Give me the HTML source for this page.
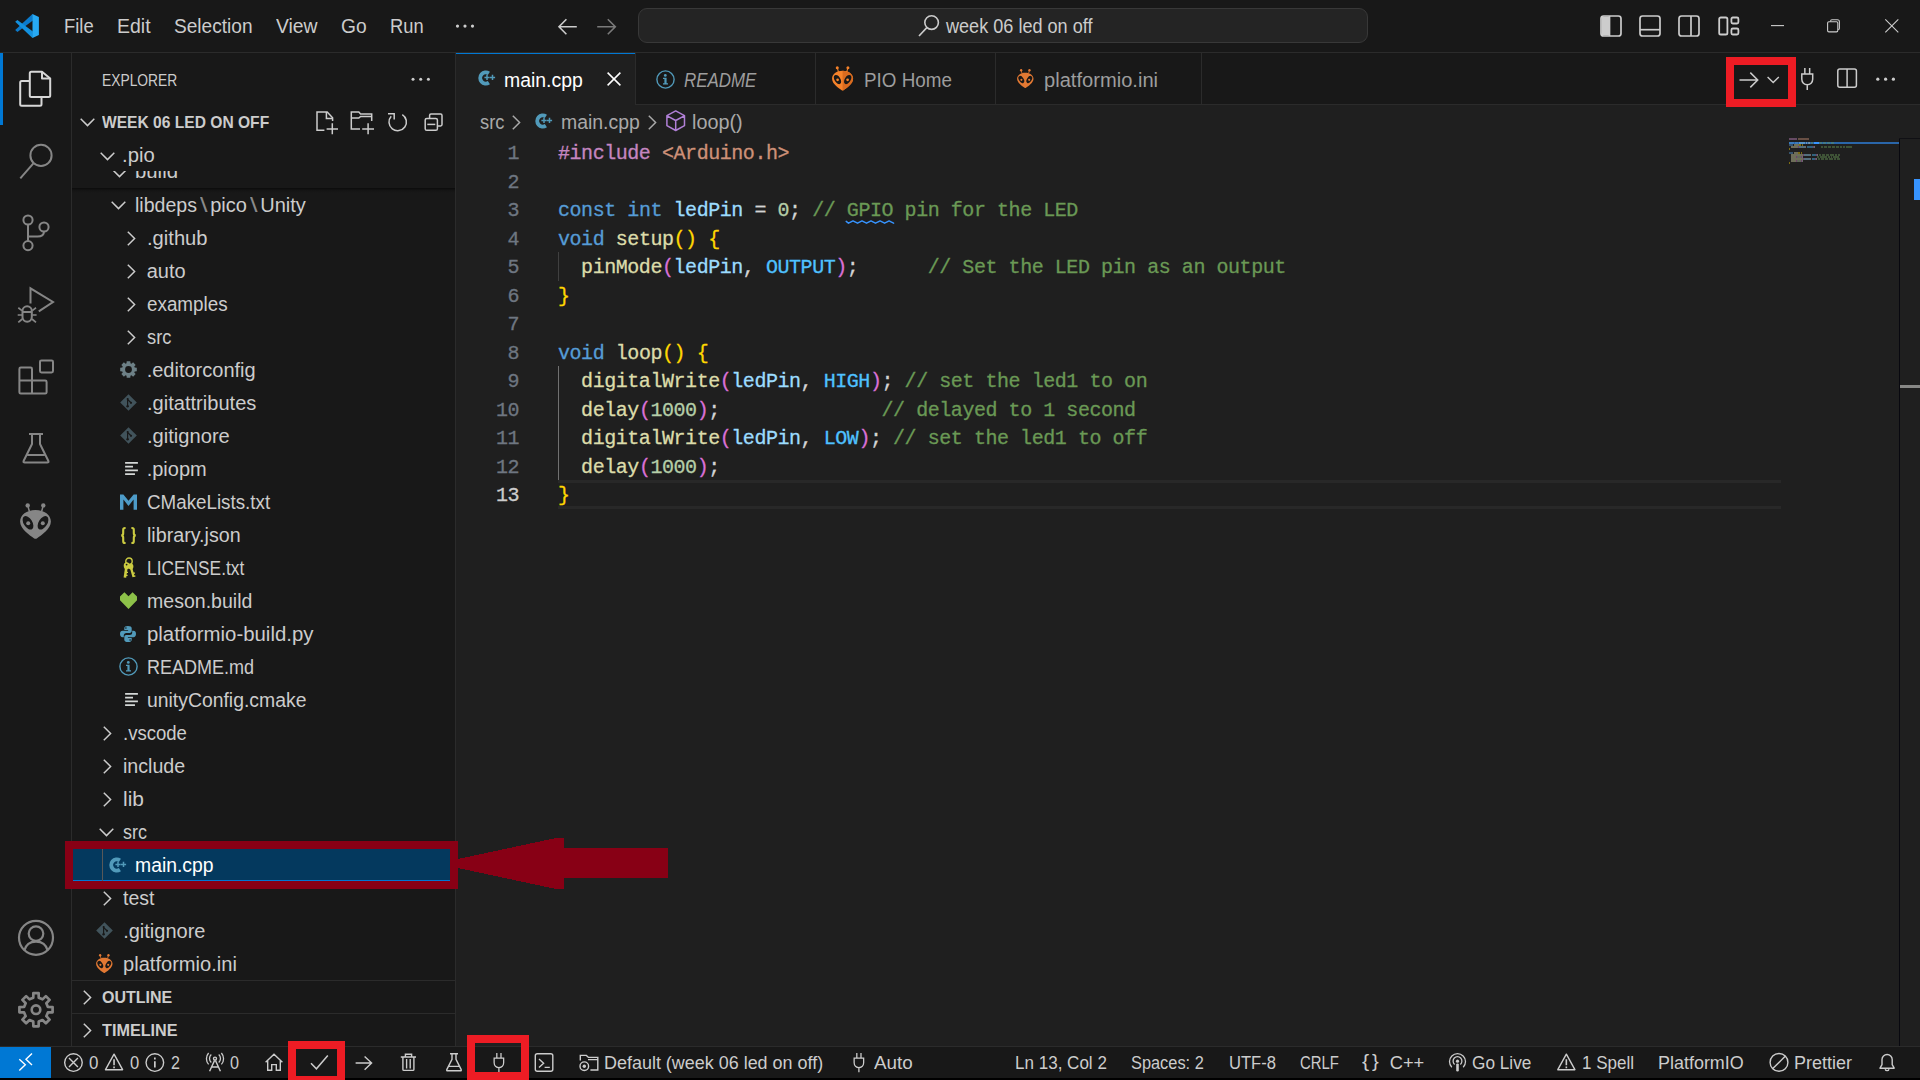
<!DOCTYPE html>
<html lang="en"><head><meta charset="utf-8"><title>main.cpp - week 06 led on off - Visual Studio Code</title>
<style>
html,body{margin:0;padding:0;background:#181818;}
body{width:1920px;height:1080px;overflow:hidden;position:relative;font-family:"Liberation Sans",sans-serif;}
.a{position:absolute;}
.t{position:absolute;white-space:pre;line-height:1;transform-origin:0 0;}
.m{position:absolute;white-space:pre;font-family:"Liberation Mono",monospace;font-size:20px;letter-spacing:-0.45px;line-height:28.5px;height:28.5px;-webkit-text-stroke:0.3px;}
svg{position:absolute;overflow:visible;}

</style></head><body>
<div class="a" style="left:0px;top:0px;width:1920px;height:52px;background:#181818;"></div>
<div class="a" style="left:0px;top:52px;width:1920px;height:1px;background:#2b2b2b;"></div>
<div class="a" style="left:0px;top:53px;width:71px;height:993px;background:#181818;"></div>
<div class="a" style="left:71px;top:53px;width:1px;height:993px;background:#2b2b2b;"></div>
<div class="a" style="left:0px;top:53px;width:3px;height:72px;background:#0078d4;"></div>
<div class="a" style="left:72px;top:53px;width:383px;height:993px;background:#181818;"></div>
<div class="a" style="left:455px;top:53px;width:1px;height:993px;background:#2b2b2b;"></div>
<div class="a" style="left:456px;top:53px;width:1464px;height:993px;background:#1f1f1f;"></div>
<div class="a" style="left:456px;top:53px;width:1464px;height:51px;background:#181818;"></div>
<div class="a" style="left:456px;top:104px;width:1464px;height:1px;background:#2b2b2b;"></div>
<div class="a" style="left:0px;top:1046px;width:1920px;height:1px;background:#2b2b2b;"></div>
<div class="a" style="left:0px;top:1047px;width:1920px;height:31px;background:#181818;"></div>
<div class="a" style="left:0px;top:1047px;width:51px;height:31px;background:#0078d4;"></div>
<div class="a" style="left:0px;top:1078px;width:1920px;height:2px;background:#000;"></div>
<svg style="left:15px;top:14px" width="24" height="24" viewBox="0 0 24 24"><polygon fill="#0b7acb" points="0.2,16.1 17.2,0.2 17.9,0.2 17.9,6.5 2.4,17.9"/><polygon fill="#1391df" points="0.2,7.8 2.4,6.1 17.9,17.6 17.9,23.8 17.2,23.8"/><polygon fill="#27a9f3" points="17.5,0.1 23.9,3.1 23.9,20.9 17.5,23.9"/></svg>
<span class="t" style="left:64.20px;top:16.00px;font-size:20px;color:#ccc;transform:scaleX(0.9193);">File</span>
<span class="t" style="left:117.20px;top:16.00px;font-size:20px;color:#ccc;transform:scaleX(0.9739);">Edit</span>
<span class="t" style="left:173.70px;top:16.00px;font-size:20px;color:#ccc;transform:scaleX(0.9550);">Selection</span>
<span class="t" style="left:276.20px;top:16.00px;font-size:20px;color:#ccc;transform:scaleX(0.9674);">View</span>
<span class="t" style="left:341.20px;top:16.00px;font-size:20px;color:#ccc;transform:scaleX(0.9588);">Go</span>
<span class="t" style="left:390.20px;top:16.00px;font-size:20px;color:#ccc;transform:scaleX(0.9155);">Run</span>
<svg style="left:455px;top:24px" width="20" height="6"><circle cx="2.5" cy="2.1" r="1.6" fill="#ccc"/><circle cx="10" cy="2.1" r="1.6" fill="#ccc"/><circle cx="17.5" cy="2.1" r="1.6" fill="#ccc"/></svg>
<svg style="left:557px;top:18px" width="21" height="17" viewBox="0 0 21 17" fill="none" stroke="#ccc" stroke-width="1.6"><path d="M19.8 8.7H2.2M9.4 1.2L2 8.7L9.4 16.2"/></svg>
<svg style="left:596px;top:18px" width="21" height="17" viewBox="0 0 21 17" fill="none" stroke="#7a7a7a" stroke-width="1.6"><path d="M1.2 8.7H19.2M11.8 1.2L19.3 8.7L11.8 16.2"/></svg>
<div class="a" style="left:638px;top:8px;width:728px;height:33px;border:1px solid #383838;border-radius:9px;background:#242424;"></div>
<svg style="left:918px;top:14px" width="22" height="23" viewBox="0 0 22 23" fill="none" stroke="#ccc" stroke-width="1.6"><circle cx="13.6" cy="8.6" r="6.8"/><path d="M8.8 13.6L1 22"/></svg>
<span class="t" style="left:946.29px;top:16.00px;font-size:20px;color:#ccc;transform:scaleX(0.9044);">week 06 led on off</span>
<svg style="left:1600px;top:15px" width="22" height="22" viewBox="0 0 22 22" fill="none" stroke="#ccc" stroke-width="1.7"><rect x="1" y="1" width="20" height="20" rx="2.6"/><path d="M1.5 1.5H9.5V20.5H1.5z" fill="#ccc" stroke="none"/><path d="M9.5 1V21"/></svg>
<svg style="left:1639px;top:15px" width="22" height="22" viewBox="0 0 22 22" fill="none" stroke="#ccc" stroke-width="1.7"><rect x="1" y="1" width="20" height="20" rx="2.6"/><path d="M1 14.7H21"/></svg>
<svg style="left:1678px;top:15px" width="22" height="22" viewBox="0 0 22 22" fill="none" stroke="#ccc" stroke-width="1.7"><rect x="1" y="1" width="20" height="20" rx="2.6"/><path d="M13 1V21"/></svg>
<svg style="left:1718px;top:16px" width="22" height="20" viewBox="0 0 22 20" fill="none" stroke="#ccc" stroke-width="1.8"><rect x="1.2" y="1.5" width="8.2" height="17" rx="1.6"/><rect x="13.4" y="1.5" width="7" height="6" rx="1.4"/><rect x="13.4" y="12.5" width="7" height="6" rx="1.4"/></svg>
<svg style="left:1770px;top:18px" width="130" height="16" viewBox="0 0 130 16" fill="none" stroke="#ccc" stroke-width="1.1"><path d="M1 7.6H14"/><rect x="57.6" y="3.7" width="10.2" height="10.2" rx="1.3"/><path d="M60.6 3.5V3Q60.6 1.7 61.9 1.7H67.4Q69.4 1.7 69.4 3.7V10.2Q69.4 11.5 68.1 11.5"/><path d="M115.3 1.3L128.3 14.3M128.3 1.3L115.3 14.3"/></svg>
<svg style="left:0;top:0" width="72" height="1046" viewBox="0 0 72 1046" fill="none" stroke-width="2" stroke-linejoin="round"><g stroke="#d7d7d7"><path d="M31.5 71.8H42L50.2 78.6V95.5Q50.2 97 48.7 97H31.3Q29.8 97 29.8 95.5V73.3Q29.8 71.8 31.3 71.8Z"/><path d="M42 71.8V78.6H50.2"/><path d="M29.8 81H21.7Q20.2 81 20.2 82.5V104.2Q20.2 105.7 21.7 105.7H40Q41.5 105.7 41.5 104.2V97"/></g><g stroke="#868686"><circle cx="41" cy="155.4" r="10.6"/><path d="M33.6 163.2L20.3 178.3"/></g><g stroke="#868686"><circle cx="28" cy="220" r="4.6"/><circle cx="44" cy="227" r="4.6"/><circle cx="28" cy="245.6" r="4.6"/><path d="M28 224.6V241M44 231.6Q44 236.6 37.5 236.6H28"/></g><g stroke="#868686"><path d="M30.5 303.5V288.3L53 302L38.8 311.3" stroke-linejoin="miter"/><rect x="22.5" y="306.3" width="9.3" height="15.4" rx="4.6"/><path d="M22.5 312H31.8" /><path d="M18.3 307.8L22 310.6M36 307.8L32.3 310.6M17.7 315H22M36.6 315H32.3M18.3 322.4L22.3 319M36 322.4L32 319" stroke-width="1.7"/></g><g stroke="#868686"><path d="M19.4 369Q19.4 367.6 20.8 367.6H30.6Q32 367.6 32 369V380.6H45.2Q46.6 380.6 46.6 382V392.2Q46.6 393.6 45.2 393.6H20.8Q19.4 393.6 19.4 392.2Z"/><path d="M19.4 380.6H32V393.6"/><rect x="40" y="360.4" width="13" height="12" rx="1.4"/></g><g stroke="#868686"><path d="M29 434H43M32 434V444L23.6 461Q23 462.6 24.8 462.6H47.2Q49 462.6 48.4 461L40 444V434M27.5 455H44.5"/></g><g stroke="#868686"><circle cx="36" cy="937.8" r="17" stroke-width="2.2"/><circle cx="36" cy="933.6" r="7.3" stroke-width="2.2"/><path d="M24.3 950.6Q26.6 941.6 36 941.6Q45.4 941.6 47.7 950.6" stroke-width="2.2"/></g><g stroke="#868686"><path d="M47.89 1006.97 L52.59 1007.07 L52.59 1012.33 L47.89 1012.43 L46.34 1016.18 L49.59 1019.57 L45.87 1023.29 L42.48 1020.04 L38.73 1021.59 L38.63 1026.29 L33.37 1026.29 L33.27 1021.59 L29.52 1020.04 L26.13 1023.29 L22.41 1019.57 L25.66 1016.18 L24.11 1012.43 L19.41 1012.33 L19.41 1007.07 L24.11 1006.97 L25.66 1003.22 L22.41 999.83 L26.13 996.11 L29.52 999.36 L33.27 997.81 L33.37 993.11 L38.63 993.11 L38.73 997.81 L42.48 999.36 L45.87 996.11 L49.59 999.83 L46.34 1003.22Z" stroke-width="2.7"/><circle cx="36" cy="1009.7" r="4.3" stroke-width="2.6"/></g></svg>
<svg style="left:20.1px;top:503px" width="31" height="36" viewBox="0 0 31 36"><path d="M15.5 7C24.5 7 30.9 12 30.9 18.5C30.9 26 21.5 32 16.8 35.4Q15.5 36.3 14.2 35.4C9.5 32 0.1 26 0.1 18.5C0.1 12 6.5 7 15.5 7Z" fill="#868686"/><path d="M7.7 2.4L9.4 8.5M23.3 2.4L21.6 8.5" stroke="#868686" stroke-width="1.5" fill="none"/><circle cx="7.7" cy="2.4" r="2.2" fill="#868686"/><circle cx="23.3" cy="2.4" r="2.2" fill="#868686"/><ellipse cx="8" cy="19.8" rx="4.3" ry="7.5" transform="rotate(-32 8 19.8)" fill="#181818"/><ellipse cx="23" cy="19.8" rx="4.3" ry="7.5" transform="rotate(32 23 19.8)" fill="#181818"/><circle cx="8.2" cy="20.3" r="2" fill="#868686"/><circle cx="22.8" cy="20.3" r="2" fill="#868686"/></svg>
<span class="t" style="left:101.60px;top:72.00px;font-size:17px;color:#ccc;transform:scaleX(0.8124);">EXPLORER</span>
<svg style="left:411px;top:77px" width="20" height="5"><circle cx="2" cy="2.3" r="1.5" fill="#ccc"/><circle cx="9.7" cy="2.3" r="1.5" fill="#ccc"/><circle cx="17.4" cy="2.3" r="1.5" fill="#ccc"/></svg>
<span class="t" style="left:101.60px;top:114.00px;font-size:17px;color:#ccc;transform:scaleX(0.9170);font-weight:700;">WEEK 06 LED ON OFF</span>
<svg style="left:79.5px;top:118px" width="15" height="9" viewBox="0 0 15 9" fill="none" stroke="#ccc" stroke-width="1.5"><path d="M0.7 0.8L7.5 7.6L14.3 0.8"/></svg>
<svg style="left:300px;top:104px" width="156" height="36" viewBox="300 104 156 36" fill="none" stroke="#ccc" stroke-width="1.5"><path d="M324.4 130.2H317V112H327.2L332.6 117.8V121"/><path d="M326.4 112V118.4H332.6"/><path d="M326.6 129H338M332.3 123.3V134.2"/><path d="M360 129H351.3V112H358.8L360.6 114H371.7V121"/><path d="M351.3 118H358.8L360.6 116.4H371.7"/><path d="M362.2 129H374M368.1 123.3V134.2"/><path d="M402.3 114.6A8.7 8.7 0 1 1 391.2 116.2"/><path d="M388 113.7H394.2V119.4"/><rect x="425.2" y="118.5" width="12.2" height="11.8" rx="1.6"/><path d="M427.3 124.4H435.3"/><path d="M429.6 118.3V115.4Q429.6 114 431 114H440.6Q442 114 442 115.4V124.6Q442 126 440.6 126H437.6"/></svg>
<div class="a" style="left:72px;top:171px;width:383px;height:17px;overflow:hidden;">
<svg style="left:39.5px;top:-2.5px" width="15" height="9" viewBox="0 0 15 9" fill="none" stroke="#ccc" stroke-width="1.5"><path d="M0.7 0.8L7.5 7.6L14.3 0.8"/></svg>
<span class="t" style="left:62.80px;top:-10.00px;font-size:20px;color:#ccc;transform:scaleX(1.0165);">build</span>
</div>
<svg style="left:99.5px;top:152px" width="15" height="9" viewBox="0 0 15 9" fill="none" stroke="#ccc" stroke-width="1.5"><path d="M0.7 0.8L7.5 7.6L14.3 0.8"/></svg>
<span class="t" style="left:122.20px;top:145.00px;font-size:20px;color:#ccc;transform:scaleX(1.0124);">.pio</span>
<div class="a" style="left:72px;top:188px;width:383px;height:5px;background:linear-gradient(#000 0%,rgba(0,0,0,0.35) 40%,rgba(0,0,0,0) 100%);opacity:.55"></div>
<div class="a" style="left:72px;top:848px;width:383px;height:33px;background:#04395e;box-sizing:border-box;border:1px solid #0078d4;"></div>
<div class="a" style="left:102px;top:848.5px;width:1px;height:33px;background:#585858;"></div>
<svg style="left:111px;top:201.3px" width="15" height="9" viewBox="0 0 15 9" fill="none" stroke="#ccc" stroke-width="1.5"><path d="M0.7 0.8L7.5 7.6L14.3 0.8"/></svg>
<svg style="left:127px;top:230.8px" width="9" height="15" viewBox="0 0 9 15" fill="none" stroke="#ccc" stroke-width="1.5"><path d="M0.8 0.7L7.6 7.5L0.8 14.3"/></svg>
<span class="t" style="left:146.70px;top:228.00px;font-size:20px;color:#ccc;transform:scaleX(1.0083);">.github</span>
<svg style="left:127px;top:263.8px" width="9" height="15" viewBox="0 0 9 15" fill="none" stroke="#ccc" stroke-width="1.5"><path d="M0.8 0.7L7.6 7.5L0.8 14.3"/></svg>
<span class="t" style="left:146.70px;top:261.00px;font-size:20px;color:#ccc;">auto</span>
<svg style="left:127px;top:296.8px" width="9" height="15" viewBox="0 0 9 15" fill="none" stroke="#ccc" stroke-width="1.5"><path d="M0.8 0.7L7.6 7.5L0.8 14.3"/></svg>
<span class="t" style="left:146.70px;top:294.00px;font-size:20px;color:#ccc;transform:scaleX(0.9416);">examples</span>
<svg style="left:127px;top:329.8px" width="9" height="15" viewBox="0 0 9 15" fill="none" stroke="#ccc" stroke-width="1.5"><path d="M0.8 0.7L7.6 7.5L0.8 14.3"/></svg>
<span class="t" style="left:146.70px;top:327.00px;font-size:20px;color:#ccc;transform:scaleX(0.9139);">src</span>
<svg style="left:120.00px;top:361.20px" width="17" height="17" viewBox="0 0 17 17"><path fill-rule="evenodd" fill="#6d8086" d="M14.70 6.54 L16.81 6.70 L16.81 10.30 L14.70 10.46 L14.27 11.49 L15.65 13.10 L13.10 15.65 L11.49 14.27 L10.46 14.70 L10.30 16.81 L6.70 16.81 L6.54 14.70 L5.51 14.27 L3.90 15.65 L1.35 13.10 L2.73 11.49 L2.30 10.46 L0.19 10.30 L0.19 6.70 L2.30 6.54 L2.73 5.51 L1.35 3.90 L3.90 1.35 L5.51 2.73 L6.54 2.30 L6.70 0.19 L10.30 0.19 L10.46 2.30 L11.49 2.73 L13.10 1.35 L15.65 3.90 L14.27 5.51Z M8.5 5.1A3.4 3.4 0 1 0 8.5 11.9A3.4 3.4 0 1 0 8.5 5.1Z"/></svg>
<span class="t" style="left:146.70px;top:360.00px;font-size:20px;color:#ccc;">.editorconfig</span>
<svg style="left:120.00px;top:394.30px" width="17" height="17" viewBox="0 0 17 17"><path fill="#41535b" d="M8.5 0.2L16.8 8.5L8.5 16.8L0.2 8.5Z"/><path d="M7.6 4.2V12.6M7.6 5.4L11.2 9" stroke="#181818" stroke-width="1.2" fill="none"/><circle cx="7.6" cy="12.2" r="1.2" fill="#181818"/><circle cx="11" cy="8.8" r="1.1" fill="#181818"/><circle cx="7.6" cy="5" r="1" fill="#181818"/></svg>
<span class="t" style="left:146.70px;top:393.00px;font-size:20px;color:#ccc;transform:scaleX(1.0037);">.gitattributes</span>
<svg style="left:120.00px;top:427.30px" width="17" height="17" viewBox="0 0 17 17"><path fill="#41535b" d="M8.5 0.2L16.8 8.5L8.5 16.8L0.2 8.5Z"/><path d="M7.6 4.2V12.6M7.6 5.4L11.2 9" stroke="#181818" stroke-width="1.2" fill="none"/><circle cx="7.6" cy="12.2" r="1.2" fill="#181818"/><circle cx="11" cy="8.8" r="1.1" fill="#181818"/><circle cx="7.6" cy="5" r="1" fill="#181818"/></svg>
<span class="t" style="left:146.70px;top:426.00px;font-size:20px;color:#ccc;transform:scaleX(1.0061);">.gitignore</span>
<svg style="left:125.00px;top:461.90px" width="14" height="13" viewBox="0 0 14 13.2"><path d="M0 1H13M0 4.8H8M0 8.5H13M0 12.2H10" stroke="#d4d7d6" stroke-width="1.8" fill="none"/></svg>
<span class="t" style="left:146.70px;top:459.00px;font-size:20px;color:#ccc;">.piopm</span>
<svg style="left:120.10px;top:494.20px" width="17" height="16" viewBox="0 0 17 16"><path fill="#4d9bc8" d="M0 15.8V0.4H3.4L8.5 6.8L13.6 0.4H17V15.8H13.6V5.6L8.5 12L3.4 5.6V15.8Z"/></svg>
<span class="t" style="left:146.70px;top:492.00px;font-size:20px;color:#ccc;transform:scaleX(0.9390);">CMakeLists.txt</span>
<svg style="left:120.30px;top:526.50px" width="17" height="17" viewBox="0 0 17 17"><path d="M5.6 1H5Q3.2 1 3.2 2.8V6.3Q3.2 8.5 1.2 8.5Q3.2 8.5 3.2 10.7V14.2Q3.2 16 5 16H5.6M11.4 1H12Q13.8 1 13.8 2.8V6.3Q13.8 8.5 15.8 8.5Q13.8 8.5 13.8 10.7V14.2Q13.8 16 12 16H11.4" stroke="#cbcb41" stroke-width="2.1" fill="none"/></svg>
<span class="t" style="left:146.70px;top:525.00px;font-size:20px;color:#ccc;transform:scaleX(0.9832);">library.json</span>
<svg style="left:121.60px;top:557.30px" width="14" height="22" viewBox="0 0 14 22"><circle cx="7" cy="4.2" r="3.2" stroke="#cbcb41" stroke-width="1.4" fill="none"/><ellipse cx="4.7" cy="8.8" rx="3" ry="3.5" fill="#cbcb41"/><path d="M4.3 11L2.9 20.6" stroke="#cbcb41" stroke-width="2.6" fill="none"/><path d="M3.6 15.4H6M3.2 18.4H5.6" stroke="#cbcb41" stroke-width="1.3" fill="none"/><ellipse cx="8.9" cy="9.4" rx="2.5" ry="3" fill="#cbcb41"/><path d="M9.3 11.6L11.6 20" stroke="#cbcb41" stroke-width="2.3" fill="none"/><path d="M10.6 16.2H13M11.4 19.2H13.4" stroke="#cbcb41" stroke-width="1.2" fill="none"/><circle cx="4.6" cy="7.6" r="0.9" fill="#181818"/></svg>
<span class="t" style="left:147.20px;top:558.00px;font-size:20px;color:#ccc;transform:scaleX(0.8664);">LICENSE.txt</span>
<svg style="left:120.00px;top:592.20px" width="17" height="17" viewBox="0 0 17 17"><path fill="#8dc149" d="M8.5 16.9L0 8.2V4.6L4.4 0.2L8.5 4.2L12.6 0.2L17 4.6V8.2Z"/></svg>
<span class="t" style="left:146.70px;top:591.00px;font-size:20px;color:#ccc;transform:scaleX(0.9768);">meson.build</span>
<svg style="left:120.40px;top:626.20px" width="16" height="16" viewBox="0 0 16 16"><path fill="#519aba" d="M7.9 0C5.6 0 4.3 0.9 4.3 2.3V4.1H8.1V4.8H2.5C1 4.8 0 6 0 8C0 10 1 11.2 2.5 11.2H3.8V9.2C3.8 7.9 4.9 6.9 6.2 6.9H9.8C10.9 6.9 11.7 6.1 11.7 5V2.3C11.7 0.9 10.3 0 7.9 0ZM5.9 1.2A0.8 0.8 0 1 1 5.9 2.8A0.8 0.8 0 1 1 5.9 1.2Z"/><path fill="#519aba" d="M8.1 16C10.4 16 11.7 15.1 11.7 13.7V11.9H7.9V11.2H13.5C15 11.2 16 10 16 8C16 6 15 4.8 13.5 4.8H12.2V6.8C12.2 8.1 11.1 9.1 9.8 9.1H6.2C5.1 9.1 4.3 9.9 4.3 11V13.7C4.3 15.1 5.7 16 8.1 16ZM10.1 14.8A0.8 0.8 0 1 1 10.1 13.2A0.8 0.8 0 1 1 10.1 14.8Z"/></svg>
<span class="t" style="left:146.70px;top:624.00px;font-size:20px;color:#ccc;transform:scaleX(1.0184);">platformio-build.py</span>
<svg style="left:119.10px;top:657.40px" width="19" height="19" viewBox="0 0 19 19"><circle cx="9.5" cy="9.5" r="8.6" stroke="#519aba" stroke-width="1.4" fill="none"/><circle cx="9.3" cy="5.4" r="1.4" fill="#519aba"/><path fill="#519aba" d="M7 7.8H10.6V13.2H12V14.4H7V13.2H8.4V9H7Z"/></svg>
<span class="t" style="left:147.20px;top:657.00px;font-size:20px;color:#ccc;transform:scaleX(0.9008);">README.md</span>
<svg style="left:125.00px;top:692.90px" width="14" height="13" viewBox="0 0 14 13.2"><path d="M0 1H13M0 4.8H8M0 8.5H13M0 12.2H10" stroke="#d4d7d6" stroke-width="1.8" fill="none"/></svg>
<span class="t" style="left:146.70px;top:690.00px;font-size:20px;color:#ccc;transform:scaleX(0.9690);">unityConfig.cmake</span>
<svg style="left:103px;top:725.8px" width="9" height="15" viewBox="0 0 9 15" fill="none" stroke="#ccc" stroke-width="1.5"><path d="M0.8 0.7L7.6 7.5L0.8 14.3"/></svg>
<span class="t" style="left:122.90px;top:723.00px;font-size:20px;color:#ccc;transform:scaleX(0.9274);">.vscode</span>
<svg style="left:103px;top:758.8px" width="9" height="15" viewBox="0 0 9 15" fill="none" stroke="#ccc" stroke-width="1.5"><path d="M0.8 0.7L7.6 7.5L0.8 14.3"/></svg>
<span class="t" style="left:122.90px;top:756.00px;font-size:20px;color:#ccc;transform:scaleX(0.9811);">include</span>
<svg style="left:103px;top:791.8px" width="9" height="15" viewBox="0 0 9 15" fill="none" stroke="#ccc" stroke-width="1.5"><path d="M0.8 0.7L7.6 7.5L0.8 14.3"/></svg>
<span class="t" style="left:122.90px;top:789.00px;font-size:20px;color:#ccc;transform:scaleX(1.0450);">lib</span>
<svg style="left:99px;top:828.3px" width="15" height="9" viewBox="0 0 15 9" fill="none" stroke="#ccc" stroke-width="1.5"><path d="M0.7 0.8L7.5 7.6L14.3 0.8"/></svg>
<span class="t" style="left:122.90px;top:822.00px;font-size:20px;color:#ccc;transform:scaleX(0.8951);">src</span>
<svg style="left:109.00px;top:856.50px" width="18" height="16" viewBox="0 0 18 16"><path d="M10.9 3.3A5.6 5.6 0 1 0 10.9 12.7" stroke="#519aba" stroke-width="3.9" fill="none"/><path d="M6.4 7.4H11.6M9 4.8V10M11.9 7.4H17.1M14.5 4.8V10" stroke="#519aba" stroke-width="1.5" fill="none"/></svg>
<span class="t" style="left:134.90px;top:855.00px;font-size:20px;color:#fff;transform:scaleX(0.9680);">main.cpp</span>
<svg style="left:103px;top:890.8px" width="9" height="15" viewBox="0 0 9 15" fill="none" stroke="#ccc" stroke-width="1.5"><path d="M0.8 0.7L7.6 7.5L0.8 14.3"/></svg>
<span class="t" style="left:122.90px;top:888.00px;font-size:20px;color:#ccc;transform:scaleX(0.9752);">test</span>
<svg style="left:96.00px;top:922.30px" width="17" height="17" viewBox="0 0 17 17"><path fill="#41535b" d="M8.5 0.2L16.8 8.5L8.5 16.8L0.2 8.5Z"/><path d="M7.6 4.2V12.6M7.6 5.4L11.2 9" stroke="#181818" stroke-width="1.2" fill="none"/><circle cx="7.6" cy="12.2" r="1.2" fill="#181818"/><circle cx="11" cy="8.8" r="1.1" fill="#181818"/><circle cx="7.6" cy="5" r="1" fill="#181818"/></svg>
<span class="t" style="left:123.20px;top:921.00px;font-size:20px;color:#ccc;">.gitignore</span>
<svg style="left:96.3px;top:954.4px" width="16.6" height="19.2" viewBox="0 0 31 36"><path d="M15.5 7C24.5 7 30.9 12 30.9 18.5C30.9 26 21.5 32 16.8 35.4Q15.5 36.3 14.2 35.4C9.5 32 0.1 26 0.1 18.5C0.1 12 6.5 7 15.5 7Z" fill="#e37933"/><path d="M7.7 2.4L9.4 8.5M23.3 2.4L21.6 8.5" stroke="#e37933" stroke-width="1.5" fill="none"/><circle cx="7.7" cy="2.4" r="2.2" fill="#e37933"/><circle cx="23.3" cy="2.4" r="2.2" fill="#e37933"/><ellipse cx="8" cy="19.8" rx="4.3" ry="7.5" transform="rotate(-32 8 19.8)" fill="#181818"/><ellipse cx="23" cy="19.8" rx="4.3" ry="7.5" transform="rotate(32 23 19.8)" fill="#181818"/><circle cx="8.2" cy="20.3" r="2" fill="#e37933"/><circle cx="22.8" cy="20.3" r="2" fill="#e37933"/></svg>
<span class="t" style="left:123.20px;top:954.00px;font-size:20px;color:#ccc;transform:scaleX(1.0044);">platformio.ini</span>
<span class="t" style="left:134.80px;top:195.00px;font-size:20px;color:#ccc;transform:scaleX(0.9779);">libdeps</span>
<span class="t" style="left:200.20px;top:195.00px;font-size:20px;color:#8a8a8a;transform:scaleX(1.3571);">\</span>
<span class="t" style="left:210.20px;top:195.00px;font-size:20px;color:#ccc;">pico</span>
<span class="t" style="left:250.20px;top:195.00px;font-size:20px;color:#8a8a8a;transform:scaleX(1.3571);">\</span>
<span class="t" style="left:260.20px;top:195.00px;font-size:20px;color:#ccc;">Unity</span>
<div class="a" style="left:72px;top:980px;width:383px;height:1px;background:#2b2b2b;"></div>
<div class="a" style="left:72px;top:1013px;width:383px;height:1px;background:#2b2b2b;"></div>
<svg style="left:83.3px;top:989.5px" width="9" height="15" viewBox="0 0 9 15" fill="none" stroke="#ccc" stroke-width="1.5"><path d="M0.8 0.7L7.6 7.5L0.8 14.3"/></svg>
<span class="t" style="left:101.50px;top:989.00px;font-size:17px;color:#ccc;transform:scaleX(0.9420);font-weight:700;">OUTLINE</span>
<svg style="left:83.3px;top:1022.5px" width="9" height="15" viewBox="0 0 9 15" fill="none" stroke="#ccc" stroke-width="1.5"><path d="M0.8 0.7L7.6 7.5L0.8 14.3"/></svg>
<span class="t" style="left:101.50px;top:1022.00px;font-size:17px;color:#ccc;transform:scaleX(0.9533);font-weight:700;">TIMELINE</span>
<div class="a" style="left:456px;top:53px;width:179px;height:52px;background:#1f1f1f;"></div>
<div class="a" style="left:456px;top:53px;width:179px;height:1px;background:#0078d4;"></div>
<div class="a" style="left:635px;top:53px;width:1px;height:51px;background:#2b2b2b;"></div>
<div class="a" style="left:815px;top:53px;width:1px;height:51px;background:#2b2b2b;"></div>
<div class="a" style="left:995px;top:53px;width:1px;height:51px;background:#2b2b2b;"></div>
<div class="a" style="left:1201px;top:53px;width:1px;height:51px;background:#2b2b2b;"></div>
<svg style="left:478.00px;top:70.00px" width="18" height="16" viewBox="0 0 18 16"><path d="M10.9 3.3A5.6 5.6 0 1 0 10.9 12.7" stroke="#519aba" stroke-width="3.9" fill="none"/><path d="M6.4 7.4H11.6M9 4.8V10M11.9 7.4H17.1M14.5 4.8V10" stroke="#519aba" stroke-width="1.5" fill="none"/></svg>
<span class="t" style="left:503.80px;top:70.00px;font-size:20px;color:#fff;transform:scaleX(0.9717);">main.cpp</span>
<svg style="left:607px;top:72px" width="14" height="14" viewBox="0 0 14 14" fill="none" stroke="#fff" stroke-width="1.5"><path d="M0.6 0.6L13.4 13.4M13.4 0.6L0.6 13.4"/></svg>
<svg style="left:656.10px;top:69.90px" width="19" height="19" viewBox="0 0 19 19"><circle cx="9.5" cy="9.5" r="8.6" stroke="#519aba" stroke-width="1.4" fill="none"/><circle cx="9.3" cy="5.4" r="1.4" fill="#519aba"/><path fill="#519aba" d="M7 7.8H10.6V13.2H12V14.4H7V13.2H8.4V9H7Z"/></svg>
<span class="t" style="left:684.20px;top:70.00px;font-size:20px;color:#9d9d9d;transform:scaleX(0.8462);font-style:italic;">README</span>
<svg style="left:832.3px;top:66.3px" width="21.2" height="24.6" viewBox="0 0 31 36"><path d="M15.5 7C24.5 7 30.9 12 30.9 18.5C30.9 26 21.5 32 16.8 35.4Q15.5 36.3 14.2 35.4C9.5 32 0.1 26 0.1 18.5C0.1 12 6.5 7 15.5 7Z" fill="#f5822a"/><path d="M15.5 7C24.5 7 30.9 12 30.9 18.5C30.9 26 21.5 32 16.8 35.4Q16 36 15.5 36Z" fill="#d96b1f"/><path d="M7.7 2.4L9.4 8.5M23.3 2.4L21.6 8.5" stroke="#f5822a" stroke-width="1.5" fill="none"/><circle cx="7.7" cy="2.4" r="2.2" fill="#f5822a"/><circle cx="23.3" cy="2.4" r="2.2" fill="#f5822a"/><ellipse cx="8" cy="19.8" rx="4.3" ry="7.5" transform="rotate(-32 8 19.8)" fill="#181818"/><ellipse cx="23" cy="19.8" rx="4.3" ry="7.5" transform="rotate(32 23 19.8)" fill="#181818"/><circle cx="8.2" cy="20.3" r="2" fill="#f5822a"/><circle cx="22.8" cy="20.3" r="2" fill="#f5822a"/></svg>
<span class="t" style="left:864.40px;top:70.00px;font-size:20px;color:#9d9d9d;transform:scaleX(0.9411);">PIO Home</span>
<svg style="left:1017.3px;top:69.4px" width="16.6" height="19.2" viewBox="0 0 31 36"><path d="M15.5 7C24.5 7 30.9 12 30.9 18.5C30.9 26 21.5 32 16.8 35.4Q15.5 36.3 14.2 35.4C9.5 32 0.1 26 0.1 18.5C0.1 12 6.5 7 15.5 7Z" fill="#e37933"/><path d="M7.7 2.4L9.4 8.5M23.3 2.4L21.6 8.5" stroke="#e37933" stroke-width="1.5" fill="none"/><circle cx="7.7" cy="2.4" r="2.2" fill="#e37933"/><circle cx="23.3" cy="2.4" r="2.2" fill="#e37933"/><ellipse cx="8" cy="19.8" rx="4.3" ry="7.5" transform="rotate(-32 8 19.8)" fill="#181818"/><ellipse cx="23" cy="19.8" rx="4.3" ry="7.5" transform="rotate(32 23 19.8)" fill="#181818"/><circle cx="8.2" cy="20.3" r="2" fill="#e37933"/><circle cx="22.8" cy="20.3" r="2" fill="#e37933"/></svg>
<span class="t" style="left:1043.80px;top:70.00px;font-size:20px;color:#9d9d9d;transform:scaleX(1.0062);">platformio.ini</span>
<svg style="left:1736px;top:66px" width="170" height="30" viewBox="1736 66 170 30" fill="none" stroke="#ccc" stroke-width="1.5"><path d="M1739.5 80H1757.6M1750.3 72.6L1757.7 80L1750.3 87.4"/><path d="M1767.6 76.9L1773.2 82.5L1778.8 76.9" stroke-width="1.4"/><rect x="1837.8" y="69" width="18.6" height="18.2" rx="2"/><path d="M1847.1 69V87.2"/><circle cx="1877.8" cy="79.2" r="1.6" fill="#ccc" stroke="none"/><circle cx="1885.6" cy="79.2" r="1.6" fill="#ccc" stroke="none"/><circle cx="1893.4" cy="79.2" r="1.6" fill="#ccc" stroke="none"/></svg>
<svg style="left:1801.3px;top:68px" width="12.5" height="22" viewBox="0 0 12.4 22" fill="none" stroke="#ccc" stroke-width="1.49"><path d="M3.8 0V6M8.6 0V6M0.75 6H11.65V11.3A5.45 5.45 0 0 1 0.75 11.3ZM6.2 16.8V22"/></svg>
<span class="t" style="left:479.60px;top:112.00px;font-size:20px;color:#a9a9a9;transform:scaleX(0.9139);">src</span>
<svg style="left:512px;top:114.7px" width="9" height="15" viewBox="0 0 9 15" fill="none" stroke="#a9a9a9" stroke-width="1.5"><path d="M0.8 0.7L7.6 7.5L0.8 14.3"/></svg>
<svg style="left:535.00px;top:113.00px" width="18" height="16" viewBox="0 0 18 16"><path d="M10.9 3.3A5.6 5.6 0 1 0 10.9 12.7" stroke="#519aba" stroke-width="3.9" fill="none"/><path d="M6.4 7.4H11.6M9 4.8V10M11.9 7.4H17.1M14.5 4.8V10" stroke="#519aba" stroke-width="1.5" fill="none"/></svg>
<span class="t" style="left:560.90px;top:112.00px;font-size:20px;color:#a9a9a9;transform:scaleX(0.9717);">main.cpp</span>
<svg style="left:648px;top:114.7px" width="9" height="15" viewBox="0 0 9 15" fill="none" stroke="#a9a9a9" stroke-width="1.5"><path d="M0.8 0.7L7.6 7.5L0.8 14.3"/></svg>
<svg style="left:666.10px;top:109.70px" width="19.4" height="21.4" viewBox="0 0 19.4 21.4"><path d="M9.7 0.9L18.5 5.6V15.6L9.7 20.5L0.9 15.6V5.6Z M1.1 5.8L9.7 10.5L18.3 5.8M9.7 10.5V20.3" stroke="#b180d7" stroke-width="1.5" fill="none" stroke-linejoin="round"/></svg>
<span class="t" style="left:692.20px;top:112.00px;font-size:20px;color:#a9a9a9;transform:scaleX(0.9902);">loop()</span>
<div class="a" style="left:558px;top:480px;width:1223px;height:3px;background:#282828;"></div>
<div class="a" style="left:558px;top:506px;width:1223px;height:3px;background:#282828;"></div>
<div class="a" style="left:558px;top:252.0px;width:1px;height:28.5px;background:#404040;"></div>
<div class="a" style="left:558px;top:366.0px;width:1px;height:114px;background:#707070;"></div>
<span class="m" style="left:460px;width:59px;text-align:right;top:140px;color:#6e7681">1</span>
<span class="m" style="left:558px;top:140px"><span style="color:#c586c0">#include</span><span style="color:#d4d4d4"> </span><span style="color:#ce9178">&lt;Arduino.h&gt;</span></span>
<span class="m" style="left:460px;width:59px;text-align:right;top:169px;color:#6e7681">2</span>
<span class="m" style="left:460px;width:59px;text-align:right;top:197px;color:#6e7681">3</span>
<span class="m" style="left:558px;top:197px"><span style="color:#569cd6">const</span><span style="color:#d4d4d4"> </span><span style="color:#569cd6">int</span><span style="color:#d4d4d4"> </span><span style="color:#9cdcfe">ledPin</span><span style="color:#d4d4d4"> = </span><span style="color:#b5cea8">0</span><span style="color:#d4d4d4">; </span><span style="color:#6a9955">// </span><span style="color:#6a9955">GPIO</span><span style="color:#6a9955"> pin for the LED</span></span>
<span class="m" style="left:460px;width:59px;text-align:right;top:226px;color:#6e7681">4</span>
<span class="m" style="left:558px;top:226px"><span style="color:#569cd6">void</span><span style="color:#d4d4d4"> </span><span style="color:#dcdcaa">setup</span><span style="color:#ffd700">()</span><span style="color:#d4d4d4"> </span><span style="color:#ffd700">{</span></span>
<span class="m" style="left:460px;width:59px;text-align:right;top:254px;color:#6e7681">5</span>
<span class="m" style="left:558px;top:254px"><span style="color:#d4d4d4">  </span><span style="color:#dcdcaa">pinMode</span><span style="color:#da70d6">(</span><span style="color:#9cdcfe">ledPin</span><span style="color:#d4d4d4">, </span><span style="color:#4fc1ff">OUTPUT</span><span style="color:#da70d6">)</span><span style="color:#d4d4d4">;</span><span style="color:#d4d4d4">      </span><span style="color:#6a9955">// Set the LED pin as an output</span></span>
<span class="m" style="left:460px;width:59px;text-align:right;top:283px;color:#6e7681">6</span>
<span class="m" style="left:558px;top:283px"><span style="color:#ffd700">}</span></span>
<span class="m" style="left:460px;width:59px;text-align:right;top:311px;color:#6e7681">7</span>
<span class="m" style="left:460px;width:59px;text-align:right;top:340px;color:#6e7681">8</span>
<span class="m" style="left:558px;top:340px"><span style="color:#569cd6">void</span><span style="color:#d4d4d4"> </span><span style="color:#dcdcaa">loop</span><span style="color:#ffd700">()</span><span style="color:#d4d4d4"> </span><span style="color:#ffd700">{</span></span>
<span class="m" style="left:460px;width:59px;text-align:right;top:368px;color:#6e7681">9</span>
<span class="m" style="left:558px;top:368px"><span style="color:#d4d4d4">  </span><span style="color:#dcdcaa">digitalWrite</span><span style="color:#da70d6">(</span><span style="color:#9cdcfe">ledPin</span><span style="color:#d4d4d4">, </span><span style="color:#4fc1ff">HIGH</span><span style="color:#da70d6">)</span><span style="color:#d4d4d4">; </span><span style="color:#6a9955">// set the led1 to on</span></span>
<span class="m" style="left:460px;width:59px;text-align:right;top:397px;color:#6e7681">10</span>
<span class="m" style="left:558px;top:397px"><span style="color:#d4d4d4">  </span><span style="color:#dcdcaa">delay</span><span style="color:#da70d6">(</span><span style="color:#b5cea8">1000</span><span style="color:#da70d6">)</span><span style="color:#d4d4d4">;</span><span style="color:#d4d4d4">              </span><span style="color:#6a9955">// delayed to 1 second</span></span>
<span class="m" style="left:460px;width:59px;text-align:right;top:425px;color:#6e7681">11</span>
<span class="m" style="left:558px;top:425px"><span style="color:#d4d4d4">  </span><span style="color:#dcdcaa">digitalWrite</span><span style="color:#da70d6">(</span><span style="color:#9cdcfe">ledPin</span><span style="color:#d4d4d4">, </span><span style="color:#4fc1ff">LOW</span><span style="color:#da70d6">)</span><span style="color:#d4d4d4">; </span><span style="color:#6a9955">// set the led1 to off</span></span>
<span class="m" style="left:460px;width:59px;text-align:right;top:454px;color:#6e7681">12</span>
<span class="m" style="left:558px;top:454px"><span style="color:#d4d4d4">  </span><span style="color:#dcdcaa">delay</span><span style="color:#da70d6">(</span><span style="color:#b5cea8">1000</span><span style="color:#da70d6">)</span><span style="color:#d4d4d4">;</span></span>
<span class="m" style="left:460px;width:59px;text-align:right;top:482px;color:#ccc">13</span>
<span class="m" style="left:558px;top:482px"><span style="color:#ffd700">}</span></span>
<svg style="left:840px;top:216px" width="60" height="12" viewBox="840 216 60 12" fill="none" stroke="#3794ff" stroke-width="1.5" stroke-linejoin="round" stroke-linecap="round"><path d="M846.2 221.4 L848.5 223.2 L853.0 220.9 L857.5 223.2 L862.0 220.9 L866.5 223.2 L871.0 220.9 L875.5 223.2 L880.1 220.9 L884.6 223.2 L889.1 220.9 L893.6 223.2"/></svg>
<svg style="left:1789px;top:138px" width="131" height="908" viewBox="1789 138 131 908" shape-rendering="crispEdges"><rect x="1789" y="142" width="110" height="2.4" fill="#2a66a9"/><rect x="1789" y="138.3" width="8" height="1.6" fill="#c586c0" opacity="0.42"/><rect x="1798" y="138.3" width="11" height="1.6" fill="#ce9178" opacity="0.42"/><rect x="1789" y="142.3" width="5" height="1.6" fill="#569cd6" opacity="0.4"/><rect x="1795" y="142.3" width="3" height="1.6" fill="#569cd6" opacity="0.4"/><rect x="1799" y="142.3" width="6" height="1.6" fill="#9cdcfe" opacity="0.4"/><rect x="1806" y="142.3" width="1" height="1.6" fill="#d4d4d4" opacity="0.4"/><rect x="1808" y="142.3" width="1" height="1.6" fill="#b5cea8" opacity="0.4"/><rect x="1809" y="142.3" width="1" height="1.6" fill="#d4d4d4" opacity="0.4"/><rect x="1811" y="142.3" width="2" height="1.6" fill="#6a9955" opacity="0.4"/><rect x="1814" y="142.3" width="4" height="1.6" fill="#6a9955" opacity="0.4"/><rect x="1819" y="142.3" width="3" height="1.6" fill="#6a9955" opacity="0.4"/><rect x="1823" y="142.3" width="3" height="1.6" fill="#6a9955" opacity="0.4"/><rect x="1827" y="142.3" width="3" height="1.6" fill="#6a9955" opacity="0.4"/><rect x="1831" y="142.3" width="3" height="1.6" fill="#6a9955" opacity="0.4"/><rect x="1789" y="144.3" width="4" height="1.6" fill="#569cd6" opacity="0.42"/><rect x="1794" y="144.3" width="5" height="1.6" fill="#dcdcaa" opacity="0.42"/><rect x="1799" y="144.3" width="2" height="1.6" fill="#ffd700" opacity="0.42"/><rect x="1802" y="144.3" width="1" height="1.6" fill="#ffd700" opacity="0.42"/><rect x="1791" y="146.3" width="7" height="1.6" fill="#dcdcaa" opacity="0.42"/><rect x="1798" y="146.3" width="1" height="1.6" fill="#da70d6" opacity="0.42"/><rect x="1799" y="146.3" width="6" height="1.6" fill="#9cdcfe" opacity="0.42"/><rect x="1805" y="146.3" width="1" height="1.6" fill="#d4d4d4" opacity="0.42"/><rect x="1807" y="146.3" width="6" height="1.6" fill="#4fc1ff" opacity="0.42"/><rect x="1813" y="146.3" width="1" height="1.6" fill="#da70d6" opacity="0.42"/><rect x="1814" y="146.3" width="1" height="1.6" fill="#d4d4d4" opacity="0.42"/><rect x="1821" y="146.3" width="2" height="1.6" fill="#6a9955" opacity="0.42"/><rect x="1824" y="146.3" width="3" height="1.6" fill="#6a9955" opacity="0.42"/><rect x="1828" y="146.3" width="3" height="1.6" fill="#6a9955" opacity="0.42"/><rect x="1832" y="146.3" width="3" height="1.6" fill="#6a9955" opacity="0.42"/><rect x="1836" y="146.3" width="3" height="1.6" fill="#6a9955" opacity="0.42"/><rect x="1840" y="146.3" width="2" height="1.6" fill="#6a9955" opacity="0.42"/><rect x="1843" y="146.3" width="2" height="1.6" fill="#6a9955" opacity="0.42"/><rect x="1846" y="146.3" width="6" height="1.6" fill="#6a9955" opacity="0.42"/><rect x="1789" y="148.3" width="1" height="1.6" fill="#ffd700" opacity="0.42"/><rect x="1789" y="152.3" width="4" height="1.6" fill="#569cd6" opacity="0.42"/><rect x="1794" y="152.3" width="4" height="1.6" fill="#dcdcaa" opacity="0.42"/><rect x="1798" y="152.3" width="2" height="1.6" fill="#ffd700" opacity="0.42"/><rect x="1801" y="152.3" width="1" height="1.6" fill="#ffd700" opacity="0.42"/><rect x="1791" y="154.3" width="12" height="1.6" fill="#dcdcaa" opacity="0.42"/><rect x="1803" y="154.3" width="1" height="1.6" fill="#da70d6" opacity="0.42"/><rect x="1804" y="154.3" width="6" height="1.6" fill="#9cdcfe" opacity="0.42"/><rect x="1810" y="154.3" width="1" height="1.6" fill="#d4d4d4" opacity="0.42"/><rect x="1812" y="154.3" width="4" height="1.6" fill="#4fc1ff" opacity="0.42"/><rect x="1816" y="154.3" width="1" height="1.6" fill="#da70d6" opacity="0.42"/><rect x="1817" y="154.3" width="1" height="1.6" fill="#d4d4d4" opacity="0.42"/><rect x="1819" y="154.3" width="2" height="1.6" fill="#6a9955" opacity="0.42"/><rect x="1822" y="154.3" width="3" height="1.6" fill="#6a9955" opacity="0.42"/><rect x="1826" y="154.3" width="3" height="1.6" fill="#6a9955" opacity="0.42"/><rect x="1830" y="154.3" width="4" height="1.6" fill="#6a9955" opacity="0.42"/><rect x="1835" y="154.3" width="2" height="1.6" fill="#6a9955" opacity="0.42"/><rect x="1838" y="154.3" width="2" height="1.6" fill="#6a9955" opacity="0.42"/><rect x="1791" y="156.3" width="5" height="1.6" fill="#dcdcaa" opacity="0.42"/><rect x="1796" y="156.3" width="1" height="1.6" fill="#da70d6" opacity="0.42"/><rect x="1797" y="156.3" width="4" height="1.6" fill="#b5cea8" opacity="0.42"/><rect x="1801" y="156.3" width="1" height="1.6" fill="#da70d6" opacity="0.42"/><rect x="1802" y="156.3" width="1" height="1.6" fill="#d4d4d4" opacity="0.42"/><rect x="1817" y="156.3" width="2" height="1.6" fill="#6a9955" opacity="0.42"/><rect x="1820" y="156.3" width="7" height="1.6" fill="#6a9955" opacity="0.42"/><rect x="1828" y="156.3" width="2" height="1.6" fill="#6a9955" opacity="0.42"/><rect x="1831" y="156.3" width="1" height="1.6" fill="#6a9955" opacity="0.42"/><rect x="1833" y="156.3" width="6" height="1.6" fill="#6a9955" opacity="0.42"/><rect x="1791" y="158.3" width="12" height="1.6" fill="#dcdcaa" opacity="0.42"/><rect x="1803" y="158.3" width="1" height="1.6" fill="#da70d6" opacity="0.42"/><rect x="1804" y="158.3" width="6" height="1.6" fill="#9cdcfe" opacity="0.42"/><rect x="1810" y="158.3" width="1" height="1.6" fill="#d4d4d4" opacity="0.42"/><rect x="1812" y="158.3" width="3" height="1.6" fill="#4fc1ff" opacity="0.42"/><rect x="1815" y="158.3" width="1" height="1.6" fill="#da70d6" opacity="0.42"/><rect x="1816" y="158.3" width="1" height="1.6" fill="#d4d4d4" opacity="0.42"/><rect x="1818" y="158.3" width="2" height="1.6" fill="#6a9955" opacity="0.42"/><rect x="1821" y="158.3" width="3" height="1.6" fill="#6a9955" opacity="0.42"/><rect x="1825" y="158.3" width="3" height="1.6" fill="#6a9955" opacity="0.42"/><rect x="1829" y="158.3" width="4" height="1.6" fill="#6a9955" opacity="0.42"/><rect x="1834" y="158.3" width="2" height="1.6" fill="#6a9955" opacity="0.42"/><rect x="1837" y="158.3" width="3" height="1.6" fill="#6a9955" opacity="0.42"/><rect x="1791" y="160.3" width="5" height="1.6" fill="#dcdcaa" opacity="0.42"/><rect x="1796" y="160.3" width="1" height="1.6" fill="#da70d6" opacity="0.42"/><rect x="1797" y="160.3" width="4" height="1.6" fill="#b5cea8" opacity="0.42"/><rect x="1801" y="160.3" width="1" height="1.6" fill="#da70d6" opacity="0.42"/><rect x="1802" y="160.3" width="1" height="1.6" fill="#d4d4d4" opacity="0.42"/><rect x="1789" y="162.3" width="1" height="1.6" fill="#ffd700" opacity="0.42"/><rect x="1814" y="142" width="4.5" height="2.4" fill="#3794ff"/><rect x="1899" y="138" width="1" height="908" fill="#08080f"/><rect x="1899" y="138" width="21" height="1" fill="#101014"/><rect x="1914" y="179" width="6" height="21" fill="#3794ff"/><rect x="1900" y="385" width="20" height="3" fill="#888886"/></svg>
<svg style="left:0;top:1046px" width="1920" height="34" viewBox="0 1046 1920 34" fill="none" stroke="#ccc" stroke-width="1.4"><path d="M19.3 1059.3L25.3 1064.8L19.3 1070.6M32 1053.4L26 1059.2L32 1065" stroke="#fff" stroke-width="1.4"/><circle cx="73.45" cy="1062.6" r="8.8"/><path d="M69 1058.1L77.9 1067.1M77.9 1058.1L69 1067.1"/><path d="M114.05 1054.2L122.6 1069.7H105.5Z" stroke-linejoin="round"/><path d="M114.05 1059.3V1065.2M114.05 1066.6V1068.2" stroke-width="1.6"/><circle cx="154.85" cy="1062.6" r="8.8"/><path d="M154.85 1061.2V1067.6M154.85 1057.6V1059.4" stroke-width="1.7"/><circle cx="215" cy="1058.6" r="1.5"/><path d="M214.6 1060.4L209.6 1071.2M215.4 1060.4L220.4 1071.2M211.5 1067H218.5"/><path d="M211.3 1054.6A5.4 5.4 0 0 0 211.3 1062.6M218.7 1054.6A5.4 5.4 0 0 1 218.7 1062.6M208.6 1053A8.6 8.6 0 0 0 208.6 1064.4M221.4 1053A8.6 8.6 0 0 1 221.4 1064.4" stroke-width="1.3"/><path d="M265.6 1062.2L274 1054.2L282.4 1062.2M267.7 1060.6V1070.2H271.7V1064.6H276.3V1070.2H280.3V1060.6" stroke-linejoin="miter"/><path d="M311 1063.2L316.4 1068.8L327.8 1055.4" stroke-width="1.5"/><path d="M355.6 1063H371.6M364.6 1056.4L371.6 1063L364.6 1069.8"/><path d="M400.8 1057H416M405.4 1056.6V1054.2H411.6V1056.6M402.9 1057.4V1069.4Q402.9 1070.4 403.9 1070.4H412.9Q413.9 1070.4 413.9 1069.4V1057.4M406.6 1059V1068.4M410.2 1059V1068.4"/><path d="M450 1053.8H458M452 1054V1059.4L446.8 1069.6Q446.4 1070.8 447.6 1070.8H460.4Q461.6 1070.8 461.2 1069.6L456 1059.4V1054M449 1066.4H459"/><rect x="535.3" y="1053.8" width="17.5" height="17.5" rx="2"/><path d="M539 1059L543.6 1063.2L539 1067.4M544.6 1067.4H549.8"/><path d="M580.3 1060.6V1055.4H586.4L588.4 1057.4H597.8V1070H590.4M588 1059.6H597.8" stroke-linejoin="miter"/><circle cx="584.3" cy="1066.2" r="4.3"/><circle cx="584.3" cy="1066.2" r="1.7" fill="#ccc" stroke="none"/><path d="M1451.8 1067.2A8 8 0 1 1 1463.2 1067.2M1454.6 1064.4A4.4 4.4 0 1 1 1460.4 1064.4" stroke-width="1.3"/><circle cx="1457.5" cy="1061.2" r="1.6" fill="#ccc" stroke="none"/><rect x="1456.2" y="1063.4" width="2.6" height="8" rx="1.2" fill="#ccc" stroke="none"/><path d="M1566.35 1054.2L1574.9 1069.7H1557.8Z" stroke-linejoin="round"/><path d="M1566.35 1059.3V1065.2M1566.35 1066.6V1068.2" stroke-width="1.6"/><circle cx="1779" cy="1062.4" r="8.9"/><path d="M1772.8 1068.6L1785.2 1056.2"/><path d="M1880 1068.2L1882 1064.6V1059.6A5.1 5.1 0 0 1 1892.2 1059.6V1064.6L1894.2 1068.2Z" stroke-linejoin="round"/><path d="M1885.2 1069.2A2 2 0 0 0 1889 1069.2"/></svg>
<svg style="left:493.3px;top:1052.8px" width="11.8" height="19.2" viewBox="0 0 12.4 22" fill="none" stroke="#ccc" stroke-width="1.47"><path d="M3.8 0V6M8.6 0V6M0.75 6H11.65V11.3A5.45 5.45 0 0 1 0.75 11.3ZM6.2 16.8V22"/></svg>
<svg style="left:853.1px;top:1052.8px" width="11.8" height="19.2" viewBox="0 0 12.4 22" fill="none" stroke="#ccc" stroke-width="1.47"><path d="M3.8 0V6M8.6 0V6M0.75 6H11.65V11.3A5.45 5.45 0 0 1 0.75 11.3ZM6.2 16.8V22"/></svg>
<span class="t" style="left:89.20px;top:1054.00px;font-size:18.3px;color:#ccc;transform:scaleX(0.9255);">0</span>
<span class="t" style="left:130.20px;top:1054.00px;font-size:18.3px;color:#ccc;transform:scaleX(0.9058);">0</span>
<span class="t" style="left:170.50px;top:1054.00px;font-size:18.3px;color:#ccc;transform:scaleX(0.8763);">2</span>
<span class="t" style="left:230.40px;top:1054.00px;font-size:18.3px;color:#ccc;transform:scaleX(0.8861);">0</span>
<span class="t" style="left:604.45px;top:1054.00px;font-size:18.3px;color:#ccc;transform:scaleX(0.9817);">Default (week 06 led on off)</span>
<span class="t" style="left:873.90px;top:1054.00px;font-size:18.3px;color:#ccc;transform:scaleX(1.0291);">Auto</span>
<span class="t" style="left:1014.80px;top:1054.00px;font-size:18.3px;color:#ccc;transform:scaleX(0.9318);">Ln 13, Col 2</span>
<span class="t" style="left:1131.00px;top:1054.00px;font-size:18.3px;color:#ccc;transform:scaleX(0.8950);">Spaces: 2</span>
<span class="t" style="left:1228.70px;top:1054.00px;font-size:18.3px;color:#ccc;transform:scaleX(0.9079);">UTF-8</span>
<span class="t" style="left:1299.90px;top:1054.00px;font-size:18.3px;color:#ccc;transform:scaleX(0.8144);">CRLF</span>
<span class="t" style="left:1361.60px;top:1052.00px;font-size:18.3px;color:#ccc;transform:scaleX(1.1745);">{</span>
<span class="t" style="left:1372.20px;top:1052.00px;font-size:18.3px;color:#ccc;transform:scaleX(1.1092);">}</span>
<span class="t" style="left:1389.70px;top:1054.00px;font-size:18.3px;color:#ccc;">C++</span>
<span class="t" style="left:1472.20px;top:1054.00px;font-size:18.3px;color:#ccc;transform:scaleX(0.9414);">Go Live</span>
<span class="t" style="left:1582.20px;top:1054.00px;font-size:18.3px;color:#ccc;transform:scaleX(0.9304);">1 Spell</span>
<span class="t" style="left:1658.20px;top:1054.00px;font-size:18.3px;color:#ccc;transform:scaleX(0.9814);">PlatformIO</span>
<span class="t" style="left:1794.20px;top:1054.00px;font-size:18.3px;color:#ccc;transform:scaleX(0.9845);">Prettier</span>
<div class="a" style="left:1726px;top:57px;width:54px;height:34px;border:8px solid #ed1c24;"></div>
<div class="a" style="left:288px;top:1041px;width:41px;height:27px;border:8px solid #ed1c24;"></div>
<div class="a" style="left:467px;top:1035px;width:46px;height:29px;border:8px solid #ed1c24;"></div>
<div class="a" style="left:65px;top:841px;width:377px;height:32px;border:8px solid #880015;"></div>
<svg style="left:0;top:0" width="1920" height="1080"><polygon shape-rendering="crispEdges" fill="#880015" points="458,859 556,838 564,838 564,848 667,848 668,849 668,877 667,878 564,878 564,889 556,889 458,868"/></svg>
</body></html>
